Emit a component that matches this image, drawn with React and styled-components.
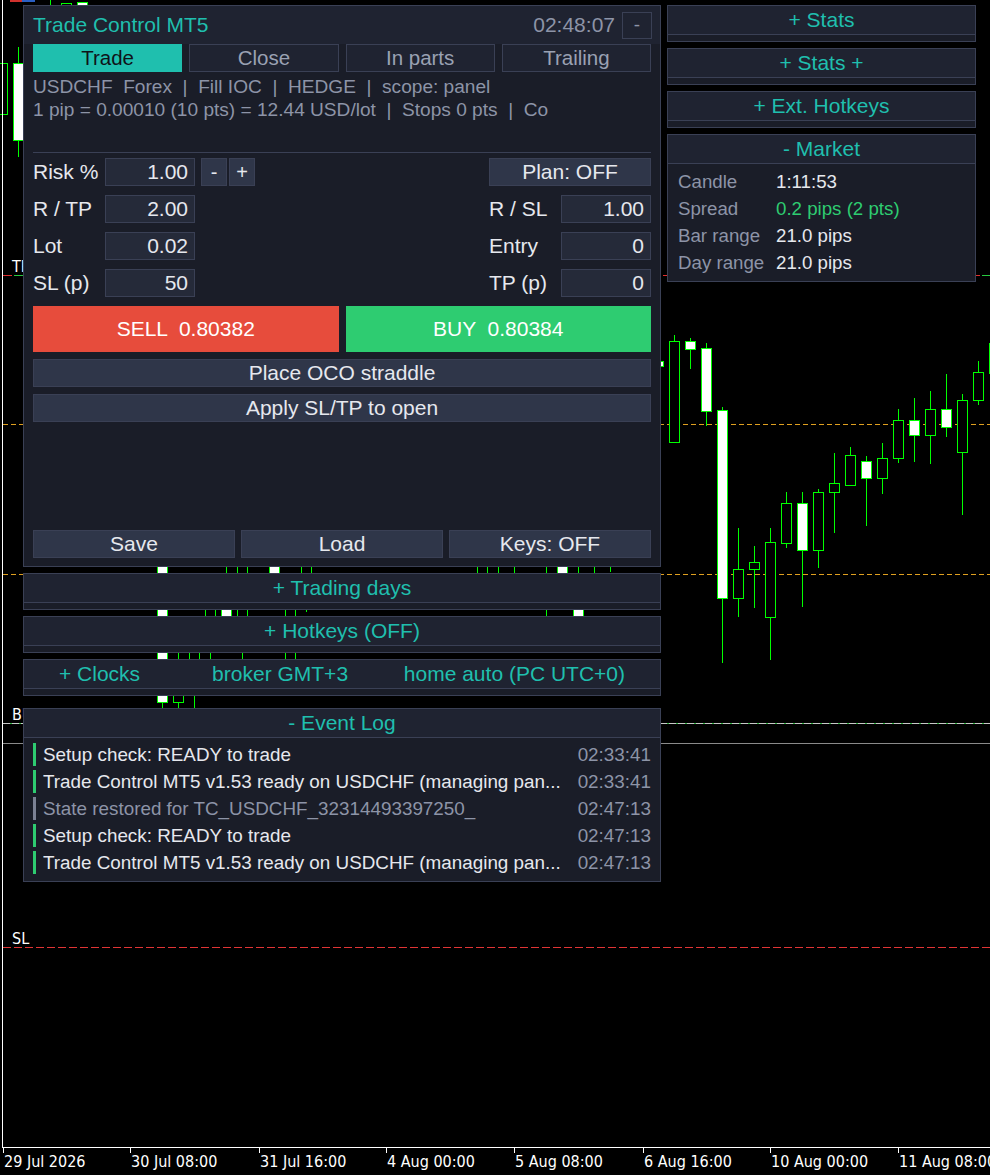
import React from 'react';
import styled, { createGlobalStyle } from 'styled-components';

const C = {
  teal: '#1fbfae',
  border: '#3a4055',
  panel: '#1a1d28',
  header: '#1f2331',
  input: '#252a39',
  button: '#2f3649',
  text: '#e6e8ee',
  muted: '#8d94a7',
  green: '#2ecc71',
  red: '#e74c3c',
  candle: '#00ff00',
};

const GlobalStyle = createGlobalStyle`
  html, body { margin: 0; padding: 0; background: #000; }
  body {
    width: 990px; height: 1175px; overflow: hidden;
    font-family: "Liberation Sans", Arial, sans-serif;
  }
  * { box-sizing: border-box; }
`;

const Stage = styled.div`
  position: relative;
  width: 990px;
  height: 1175px;
  background: #000;
  overflow: hidden;
`;

const ChartLayer = styled.svg`
  position: absolute;
  left: 0;
  top: 0;
  display: block;
`;

const Overlay = styled.div`
  position: absolute;
  left: 0;
  top: 0;
  display: flex;
  align-items: flex-start;
  gap: 6px;
  padding: 5px 0 0 23px;
`;

const Column = styled.div`
  display: flex;
  flex-direction: column;
  gap: 6px;
  width: ${(p) => p.$width}px;
`;

const Panel = styled.div`
  height: 562px;
  border: 1px solid ${C.border};
  background: ${C.panel};
  display: flex;
  flex-direction: column;
`;

const PanelHeader = styled.div`
  height: 38px;
  background: ${C.header};
  display: flex;
  align-items: center;
  padding: 0 8px 0 9px;
`;

const Title = styled.div`
  font-size: 21px;
  color: ${C.teal};
  flex: 1;
`;

const Clock = styled.div`
  font-size: 21px;
  color: ${C.muted};
`;

const MinButton = styled.div`
  width: 30px;
  height: 27px;
  margin-left: 7px;
  border: 1px solid ${C.border};
  display: flex;
  align-items: center;
  justify-content: center;
  color: ${C.muted};
  font-size: 19px;
`;

const PanelBody = styled.div`
  flex: 1;
  display: flex;
  flex-direction: column;
  padding: 0 9px;
`;

const Tabs = styled.div`
  display: grid;
  grid-template-columns: repeat(4, 1fr);
  gap: 7px;
  height: 28px;
`;

const Tab = styled.div`
  border: 1px solid ${(p) => (p.$active ? C.teal : C.border)};
  background: ${(p) => (p.$active ? C.teal : C.header)};
  color: ${(p) => (p.$active ? '#0f1319' : '#9aa1b3')};
  font-size: 20.5px;
  display: flex;
  align-items: center;
  justify-content: center;
`;

const Info = styled.div`
  padding-top: 3px;
  font-size: 19.1px;
  line-height: 23px;
  color: ${C.muted};
  white-space: pre;
  overflow: hidden;
`;

const Separator = styled.div`
  height: 1px;
  margin-top: 31px;
  background: ${C.border};
`;

const Form = styled.div`
  margin-top: 5px;
  display: grid;
  grid-template-columns: 72px 90px 1fr 72px 90px;
  grid-auto-rows: 28px;
  row-gap: 9px;
`;

const Label = styled.div`
  font-size: 21px;
  color: ${C.text};
  display: flex;
  align-items: center;
  grid-column: ${(p) => p.$col || 'auto'};
`;

const Field = styled.div`
  background: ${C.input};
  border: 1px solid ${C.border};
  font-size: 21px;
  color: ${C.text};
  display: flex;
  align-items: center;
  justify-content: flex-end;
  padding-right: 6px;
  grid-column: ${(p) => p.$col || 'auto'};
`;

const Steppers = styled.div`
  display: flex;
  gap: 2px;
  margin-left: 6px;
`;

const StepButton = styled.div`
  width: 26px;
  height: 28px;
  background: ${C.button};
  border: 1px solid ${C.border};
  color: ${C.text};
  font-size: 20px;
  display: flex;
  align-items: center;
  justify-content: center;
`;

const Button = styled.div`
  height: ${(p) => p.$h || 28}px;
  margin-top: ${(p) => p.$mt || 0}px;
  background: ${(p) => p.$bg || C.button};
  border: 1px solid ${(p) => p.$bd || C.border};
  color: ${(p) => p.$fg || C.text};
  font-size: 21px;
  display: flex;
  align-items: center;
  justify-content: center;
  white-space: pre;
  grid-column: ${(p) => p.$col || 'auto'};
`;

const TradeRow = styled.div`
  display: grid;
  grid-template-columns: 1fr 1fr;
  gap: 7px;
  margin-top: 9px;
`;

const Footer = styled.div`
  margin-top: auto;
  margin-bottom: 8px;
  display: grid;
  grid-template-columns: repeat(3, 1fr);
  gap: 6px;
`;

const Section = styled.div`
  border: 1px solid ${C.border};
  background: ${C.panel};
  margin-top: ${(p) => p.$mt || 0}px;
`;

const SectionHeader = styled.div`
  height: 29px;
  background: ${C.header};
  border-bottom: 1px solid ${C.border};
  color: ${C.teal};
  font-size: 21px;
  display: flex;
  align-items: center;
  justify-content: ${(p) => p.$justify || 'center'};
  padding: ${(p) => p.$pad || '0'};
`;

const CollapsedStrip = styled.div`
  height: 6px;
`;

const ClockItem = styled.span`
  margin-left: ${(p) => p.$ml || '0'};
`;

const MarketBody = styled.div`
  padding: 4px 10px 5px 10px;
`;

const MarketRow = styled.div`
  height: 27px;
  display: flex;
  align-items: center;
  font-size: 18.7px;
`;

const MarketLabel = styled.div`
  width: 98px;
  color: ${C.muted};
`;

const MarketValue = styled.div`
  color: ${(p) => p.$color || C.text};
`;

const LogBody = styled.div`
  padding: 5px 9px 7px 9px;
  display: flex;
  flex-direction: column;
  gap: 4px;
`;

const LogRow = styled.div`
  height: 23px;
  display: flex;
  align-items: center;
  font-size: 18.85px;
`;

const LogBar = styled.div`
  width: 3px;
  align-self: stretch;
  background: ${(p) => p.$color};
`;

const LogText = styled.div`
  flex: 1;
  margin-left: 7px;
  color: ${(p) => (p.$dim ? C.muted : C.text)};
  white-space: nowrap;
  overflow: hidden;
`;

const LogTime = styled.div`
  color: ${C.muted};
`;

/* ---------- chart ---------- */

// [k, bodyTop, bodyBottom, wickTop, wickBottom, whiteBody]
const CANDLES = [
  [-1, 63, 114, 55, 120, false],
  [0, 63, 140, 47, 157, true],
  [2, 20, 90, -5, 110, false],
  [3, 3, 60, 3, 80, false],
  [4, 2, 50, 2, 70, true],
  [9, 540, 702, 520, 712, true],
  [10, 668, 702, 640, 712, false],
  [11, 622, 690, 618, 720, false],
  [12, 590, 645, 580, 660, false],
  [13, 578, 640, 560, 645, true],
  [14, 565, 625, 555, 665, false],
  [16, 548, 580, 535, 590, true],
  [17, 590, 680, 585, 686, false],
  [18, 530, 580, 520, 612, false],
  [29, 520, 580, 510, 590, false],
  [30, 500, 540, 490, 575, false],
  [31, 480, 520, 470, 575, false],
  [33, 540, 560, 530, 620, false],
  [34, 550, 580, 540, 585, true],
  [35, 600, 630, 560, 640, true],
  [36, 520, 560, 510, 575, false],
  [37, 500, 550, 490, 572, false],
  [40, 361, 366, 350, 372, true],
  [41, 341, 442, 335, 442, false],
  [42, 341, 349, 338, 369, true],
  [43, 348, 411, 343, 426, true],
  [44, 410, 598, 407, 663, true],
  [45, 569, 598, 528, 617, false],
  [46, 562, 569, 546, 608, false],
  [47, 542, 617, 528, 660, false],
  [48, 503, 543, 492, 548, false],
  [49, 503, 550, 492, 607, true],
  [50, 492, 550, 489, 568, false],
  [51, 483, 492, 453, 533, false],
  [52, 455, 485, 447, 486, false],
  [53, 461, 478, 456, 526, true],
  [54, 458, 478, 443, 494, false],
  [55, 420, 458, 409, 463, false],
  [56, 420, 435, 398, 462, true],
  [57, 409, 435, 391, 464, false],
  [58, 409, 427, 374, 437, true],
  [59, 400, 452, 394, 515, false],
  [60, 372, 400, 361, 405, false],
  [61, 343, 373, 335, 380, false],
];

const AXIS = [
  [3, '29 Jul 2026'],
  [130, '30 Jul 08:00'],
  [259, '31 Jul 16:00'],
  [386, '4 Aug 00:00'],
  [514, '5 Aug 08:00'],
  [643, '6 Aug 16:00'],
  [770, '10 Aug 00:00'],
  [898, '11 Aug 08:00'],
];

const LEVEL_LABELS = [
  [272, 'TP'],
  [720, 'BUY'],
  [944, 'SL'],
];

const CHART_FONT = '"DejaVu Sans Condensed", "Liberation Sans", sans-serif';

function Candle({ k, bt, bb, wt, wb, white }) {
  const L = 13 + 16 * k;
  return (
    <g>
      <line x1={L + 5.5} x2={L + 5.5} y1={wt} y2={wb} stroke={C.candle} strokeWidth="1" />
      <rect
        x={L + 0.5}
        y={bt + 0.5}
        width={10}
        height={Math.max(bb - bt, 1)}
        fill={white ? '#ffffff' : '#000000'}
        stroke={C.candle}
        strokeWidth="1"
      />
    </g>
  );
}

function Chart() {
  return (
    <ChartLayer width="990" height="1175" viewBox="0 0 990 1175" shapeRendering="crispEdges">
      <rect x="0" y="0" width="990" height="1175" fill="#000" />
      <rect x="10" y="0" width="12" height="2" fill="#d0312d" />
      <rect x="22" y="0" width="13" height="2" fill="#2a5fc4" />

      {/* level lines */}
      <line x1="3" x2="990" y1="275.5" y2="275.5" stroke="#e03030" strokeDasharray="9 13" />
      <line x1="3" x2="990" y1="275.5" y2="275.5" stroke="#27c93f" strokeDasharray="9 13" strokeDashoffset="-11" />
      <line x1="3" x2="990" y1="424.5" y2="424.5" stroke="#e0a020" strokeDasharray="5 3" />
      <line x1="3" x2="990" y1="574.5" y2="574.5" stroke="#e0a020" strokeDasharray="5 3" />
      <line x1="3" x2="990" y1="723.5" y2="723.5" stroke="#c8c8c8" strokeDasharray="7 2" />
      <line x1="3" x2="990" y1="723.5" y2="723.5" stroke="#3ac04a" strokeDasharray="2 7" strokeDashoffset="-7" />
      <line x1="3" x2="990" y1="743.5" y2="743.5" stroke="#8a8a8a" />
      <line x1="3" x2="990" y1="947.5" y2="947.5" stroke="#e03535" strokeDasharray="8 3" />

      {CANDLES.map(([k, bt, bb, wt, wb, white]) => (
        <Candle key={k} k={k} bt={bt} bb={bb} wt={wt} wb={wb} white={white} />
      ))}

      {LEVEL_LABELS.map(([y, t]) => (
        <text key={t} x="12" y={y} fill="#ffffff" fontSize="16" fontFamily={CHART_FONT}>
          {t}
        </text>
      ))}

      {/* frame */}
      <line x1="2.5" x2="2.5" y1="0" y2="1147" stroke="#ffffff" />
      <line x1="2" x2="990" y1="1147.5" y2="1147.5" stroke="#ffffff" />
      {AXIS.map(([x, t]) => (
        <g key={t}>
          <line x1={x + 0.5} x2={x + 0.5} y1="1147" y2="1153" stroke="#ffffff" />
          <text x={x + 1} y="1167" fill="#ffffff" fontSize="16" fontFamily={CHART_FONT}>
            {t}
          </text>
        </g>
      ))}
    </ChartLayer>
  );
}

/* ---------- panels ---------- */

const LOG = [
  ['Setup check: READY to trade', '02:33:41', false],
  ['Trade Control MT5 v1.53 ready on USDCHF (managing pan...', '02:33:41', false],
  ['State restored for TC_USDCHF_32314493397250_', '02:47:13', true],
  ['Setup check: READY to trade', '02:47:13', false],
  ['Trade Control MT5 v1.53 ready on USDCHF (managing pan...', '02:47:13', false],
];

function TradePanel() {
  return (
    <Panel>
      <PanelHeader>
        <Title>Trade Control MT5</Title>
        <Clock>02:48:07</Clock>
        <MinButton>-</MinButton>
      </PanelHeader>
      <PanelBody>
        <Tabs>
          <Tab $active>Trade</Tab>
          <Tab>Close</Tab>
          <Tab>In parts</Tab>
          <Tab>Trailing</Tab>
        </Tabs>
        <Info>
          {'USDCHF  Forex  |  Fill IOC  |  HEDGE  |  scope: panel'}
          {'\n'}
          {'1 pip = 0.00010 (10 pts) = 12.44 USD/lot  |  Stops 0 pts  |  Co'}
        </Info>
        <Separator />
        <Form>
          <Label>Risk %</Label>
          <Field>1.00</Field>
          <Steppers>
            <StepButton>-</StepButton>
            <StepButton>+</StepButton>
          </Steppers>
          <Button $col="4 / 6">Plan: OFF</Button>

          <Label>R / TP</Label>
          <Field>2.00</Field>
          <Label $col="4">R / SL</Label>
          <Field $col="5">1.00</Field>

          <Label>Lot</Label>
          <Field>0.02</Field>
          <Label $col="4">Entry</Label>
          <Field $col="5">0</Field>

          <Label>SL (p)</Label>
          <Field>50</Field>
          <Label $col="4">TP (p)</Label>
          <Field $col="5">0</Field>
        </Form>
        <TradeRow>
          <Button $h={46} $bg={C.red} $bd={C.red} $fg="#ffffff">{'SELL  0.80382'}</Button>
          <Button $h={46} $bg={C.green} $bd={C.green} $fg="#ffffff">{'BUY  0.80384'}</Button>
        </TradeRow>
        <Button $mt={7}>Place OCO straddle</Button>
        <Button $mt={7}>Apply SL/TP to open</Button>
        <Footer>
          <Button>Save</Button>
          <Button>Load</Button>
          <Button>Keys: OFF</Button>
        </Footer>
      </PanelBody>
    </Panel>
  );
}

function Collapsed({ children, ...rest }) {
  return (
    <Section>
      <SectionHeader {...rest}>{children}</SectionHeader>
      <CollapsedStrip />
    </Section>
  );
}

function MarketPanel() {
  const rows = [
    ['Candle', '1:11:53'],
    ['Spread', '0.2 pips (2 pts)', C.green],
    ['Bar range', '21.0 pips'],
    ['Day range', '21.0 pips'],
  ];
  return (
    <Section>
      <SectionHeader>- Market</SectionHeader>
      <MarketBody>
        {rows.map(([l, v, c]) => (
          <MarketRow key={l}>
            <MarketLabel>{l}</MarketLabel>
            <MarketValue $color={c}>{v}</MarketValue>
          </MarketRow>
        ))}
      </MarketBody>
    </Section>
  );
}

function EventLog() {
  return (
    <Section $mt={6}>
      <SectionHeader>- Event Log</SectionHeader>
      <LogBody>
        {LOG.map(([t, time, dim], i) => (
          <LogRow key={i}>
            <LogBar $color={dim ? '#7b8194' : C.green} />
            <LogText $dim={dim}>{t}</LogText>
            <LogTime>{time}</LogTime>
          </LogRow>
        ))}
      </LogBody>
    </Section>
  );
}

export default function App() {
  return (
    <Stage>
      <GlobalStyle />
      <Chart />
      <Overlay>
        <Column $width={638}>
          <TradePanel />
          <Collapsed>+ Trading days</Collapsed>
          <Collapsed>+ Hotkeys (OFF)</Collapsed>
          <Collapsed $justify="flex-start" $pad="0 35px">
            <ClockItem>+ Clocks</ClockItem>
            <ClockItem $ml="72px">broker GMT+3</ClockItem>
            <ClockItem $ml="auto">home auto (PC UTC+0)</ClockItem>
          </Collapsed>
          <EventLog />
        </Column>
        <Column $width={309}>
          <Collapsed>+ Stats</Collapsed>
          <Collapsed>+ Stats +</Collapsed>
          <Collapsed>+ Ext. Hotkeys</Collapsed>
          <MarketPanel />
        </Column>
      </Overlay>
    </Stage>
  );
}
